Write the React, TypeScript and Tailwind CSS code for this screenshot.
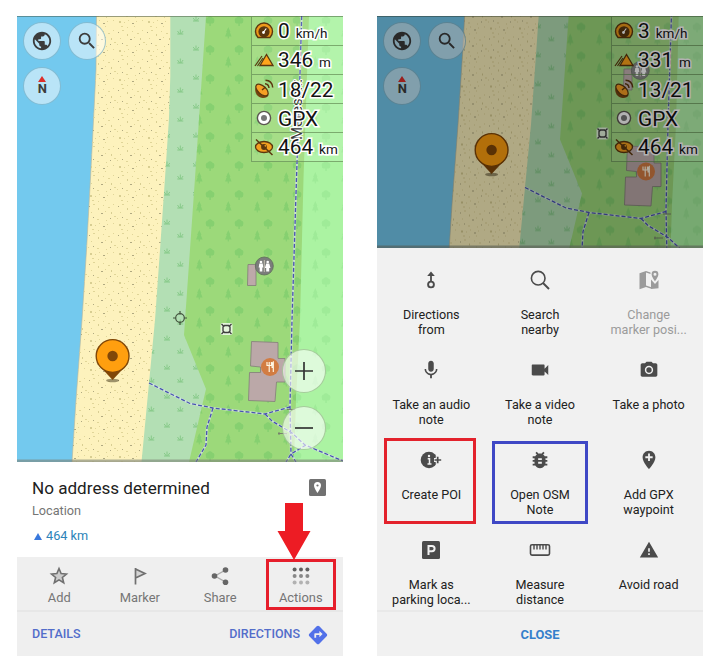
import React from "react";
import {
  MdPublic, MdSearch, MdMic, MdVideocam, MdPhotoCamera, MdBugReport, MdAddLocation, MdWarning, MdDirections,
} from "react-icons/md";

const SAND: [number, number, number][] = [
  [2, 3, 0], [6, 1, 1], [11, 5, 2], [16, 2, 1], [21, 4, 1], [26, 1, 1], [4, 9, 1], [14, 10, 0], [18, 8, 1],
  [24, 9, 2], [27, 13, 1], [1, 15, 1], [6, 14, 0], [10, 16, 1], [19, 17, 1], [23, 15, 0], [3, 21, 2], [8, 22, 1],
  [12, 20, 1], [16, 23, 0], [20, 21, 1], [26, 20, 1], [5, 26, 1], [11, 27, 1], [18, 26, 1],
];
const SAND_COLORS = ["#b0a981", "#e0d598", "#d8ce92"];

function Tree({ x, y }: { x: number; y: number }) {
  return <path d={`M${x - 0.7} ${y + 5}v-2.600c-2 .5-3.700-.5-3.400-2.200-.8-1.800.3-3.600 1.900-3.700.8-1.700 3.600-1.700 4.400 0 1.700.2 2.800 2 2 3.700.2 1.800-1.400 2.800-3.400 2.200V${y + 5}z`} />;
}
function Conifer({ x, y }: { x: number; y: number }) {
  return <path d={`M${x} ${y - 6}l2.200 5-.7.1 1.800 4.300H${x + 0.6}v2.100h-1.200v-2.100h-2.700l1.800-4.300-.7-.1z`} />;
}
function Grass({ x, y }: { x: number; y: number }) {
  return <path d={`M${x - 3} ${y + 2}h6M${x} ${y + 2}v-4.500M${x - 0.6} ${y + 2}l-2.200-3M${x + 0.6} ${y + 2}l2.200-3`} />;
}

function MapArt({ id, height, dx, dy, px, py, pin, cross }: {
  id: string; height: number; dx: number; dy: number; px: number; py: number; pin: [number, number]; cross?: boolean;
}) {
  const path = "M149 383l41 20.500 23 4.500 52 6 25-7M213 408l-6 19-1 18-10 17M265 414l7 7 20 12 13 12 38 16M306 445l-15 9-5 8M291 454l5 8M301.700 16L300 73l-3.500 105-4.500 142-2 85 1 49";
  return (
    <svg className="absolute inset-0 h-full w-full" viewBox={`17 16 326 ${height}`}>
      <defs>
        <pattern id={id + "sand"} width="29" height="29" patternUnits="userSpaceOnUse" patternTransform={`translate(${px} ${py})`}>
          {SAND.map(([x, y, c], i) => <rect key={i} x={x} y={y} width={i % 3 === 1 ? 2 : 1} height={c === 2 ? 2 : 1} fill={SAND_COLORS[c]} />)}
        </pattern>
        <pattern id={id + "tree"} x="195" y="13" width="29" height="29" patternUnits="userSpaceOnUse" patternTransform={`translate(${px} ${py})`}>
          <g fill="#86d070"><Tree x={15} y={8} /><Conifer x={4.3} y={20} /></g>
        </pattern>
        <pattern id={id + "pale"} x="195" y="13" width="29" height="29" patternUnits="userSpaceOnUse" patternTransform={`translate(${px} ${py})`}>
          <g fill="#9feb98"><Tree x={15} y={8} /><Conifer x={4.3} y={20} /></g>
        </pattern>
        <pattern id={id + "marsh"} x="160" y="13" width="29" height="29" patternUnits="userSpaceOnUse" patternTransform={`translate(${px} ${py})`}>
          <g stroke="#86c988" strokeWidth="1" fill="none"><Grass x={7} y={6} /><Grass x={20.3} y={19} /></g>
        </pattern>
      </defs>
      <rect x="0" y="0" width="360" height="480" fill="#73c9ee" />
      <g transform={`translate(${dx} ${dy})`}>
        {["#fdf2bd", `url(#${id}sand)`].map((f, i) => (
          <path key={f} fill={f} stroke={i ? "none" : "#b9b59b"} strokeWidth=".6" d="M96.500 16L96 70l-3.500 70-2 38-4 72-4.500 70-6 80-4 62h120V16z" />
        ))}
        {["#b3dfb4", `url(#${id}marsh)`].map((f) => (
          <path key={f} fill={f} d="M170.300 16v60l-1.300 42-4 60-5 72-5 70-6 63-7.500 79H345V16z" />
        ))}
        {["#9cd97a", `url(#${id}tree)`].map((f) => (
          <path key={f} fill={f} d="M206 16l-11 162-11 157 22 54-17 73h156V16z" />
        ))}
        {["#abf3a2", `url(#${id}pale)`].map((f) => (
          <path key={f} fill={f} d="M309 16l-5.500 162-3.500 142-4 80-2 62h52V16z" />
        ))}
        <path d={path} fill="none" stroke="#d7e4e6" strokeOpacity=".75" strokeWidth="2.200" />
        <path d={path} fill="none" stroke="#4854b0" strokeWidth="1.300" strokeDasharray="4 2" />
        <path d="M287 409.500h8M278 433.500h9M279 432v3" stroke="#77806c" fill="none" />
        <path d="M248 264.500h8v21h-8.500z" fill="#bda9a9" stroke="#827d77" strokeWidth=".8" />
        <circle cx="264.300" cy="266" r="9" fill="#7b7c7b" stroke="#5d6b59" strokeWidth=".8" />
        <path d="M264.300 260v12" stroke="#d8d3c4" strokeWidth=".8" />
        <g fill="#fff"><circle cx="261" cy="262" r="1.300" /><path d="M259.300 263.500h3.400l.6 4h-1v4h-2.600v-4h-1z" /><circle cx="267.700" cy="262" r="1.300" /><path d="M266.200 263.500h3l1.300 4.500h-1.300v3.500h-3V268h-1.300z" /></g>
        <path d="M251.500 341.500l26.500 1v16h7v23.500h-8.500l-1.500 19.500-26.500-1 1-28h11v-5.500l-10-1z" fill="#bba8a8" stroke="#837d78" strokeWidth=".8" />
        <circle cx="270" cy="367" r="9" fill="#d27c42" />
        <path d="M267 362v3.500h4.400V362M269.200 362v10M273.300 372v-10q-1.500 1-1.200 5.500h1.200" stroke="#fff8e5" strokeWidth="1.150" fill="none" />
        <rect x="220.500" y="323" width="12" height="12" rx="2" fill="#fff" fillOpacity=".75" />
        <g fill="none" stroke="#404040" strokeWidth="1.400"><path d="M224.500 325.500h4l1.500 1.500v4l-1.500 1.500h-4l-1.500-1.500v-4z" /><path d="M221.500 324l2.500 2.500M231.500 324l-2.500 2.500M221.500 334l2.500-2.500M231.500 334l-2.500-2.500" /></g>
      </g>
      {cross && (
        <>
          <text transform="translate(302 140) rotate(-90)" className="text-[15px]" fontFamily="Roboto, sans-serif" fill="#222" stroke="#fff" strokeWidth="2" paintOrder="stroke">Meress..:</text>
          <g stroke="#44543e" strokeWidth="1.200" fill="none"><circle cx="180" cy="318" r="4.300" /><path d="M180 311v3.500M180 321.500v3.500M173 318h3M184 318h3" /></g>
        </>
      )}
      <g transform={`translate(${pin[0]} ${pin[1]})`}>
        <ellipse cx="0" cy="24.500" rx="6.500" ry="1.800" fill="#5d5232" opacity=".6" />
        <path d="M-13 10L0 24 13 10z" fill="#804708" />
        <circle r="16.400" fill="#ff9f0f" stroke="#804708" strokeWidth="1.400" />
        <circle r="5.200" fill="#804708" />
      </g>
      <path d="M17 16.500h326" stroke="#394932" strokeOpacity=".45" />
      <path d={`M17 ${height + 14.7}h326`} stroke="#7b8276" strokeOpacity=".6" strokeWidth="2.500" />
    </svg>
  );
}

const gauges = [
  <svg viewBox="0 0 20 20" className="h-5 w-5"><path d="M4 16.500a8.500 8.500 0 1 1 12 0z" fill="#ee9a1a" stroke="#5c370e" strokeWidth="1.400" /><circle cx="10" cy="10.800" r="5.600" fill="#5c370e" /><path d="M9.300 11.500l3-4" stroke="#fff" strokeWidth="1.200" /><circle cx="9.500" cy="11.500" r="1.400" fill="#fff" /></svg>,
  <svg viewBox="0 0 20 20" className="h-5 w-5"><path d="M6 15.500L12.500 4.500 19 15.500z" fill="#ffa51b" stroke="#5c370e" strokeWidth="1.300" /><path d="M1 16L8 6M3.500 16L9 8" stroke="#5c370e" strokeWidth="1.200" /></svg>,
  <svg viewBox="0 0 20 20" className="h-5 w-5"><path d="M2.500 6C-1 12 3 18.500 9 19c3 0 4.500-1 5.500-2.500z" fill="#744411" /><ellipse cx="8" cy="11" rx="7.500" ry="4" transform="rotate(42 8 11)" fill="#f6a025" stroke="#5c370e" strokeWidth="1.200" /><path d="M8 11l3.500-3M11 4.800q3.500.2 4 4.200M11.500 1.300q6.500 0 7.200 7.200" fill="none" stroke="#5c370e" strokeWidth="1.500" /></svg>,
  <svg viewBox="0 0 20 20" className="h-5 w-5"><circle cx="10" cy="10" r="6.600" fill="#fff" stroke="#5b5550" strokeWidth="1.400" /><circle cx="10" cy="10" r="3" fill="#777" /></svg>,
  <svg viewBox="0 0 20 20" className="h-5 w-5"><ellipse cx="10" cy="10" rx="8.500" ry="5.500" fill="#f4a020" stroke="#5c370e" strokeWidth="1.300" /><circle cx="10" cy="10" r="2.900" fill="#5c370e" /><circle cx="11.300" cy="8.800" r=".9" fill="#f4a020" /><path d="M2 2.500l16.500 15.500" stroke="#5c370e" strokeWidth="1.500" /></svg>,
];

function MapControls({ values }: { values: [string, string][] }) {
  const round = "flex h-[38px] w-[38px] items-center justify-center rounded-full border border-[#5da0bb]/60 bg-white/50 text-[#3c3c3c]";
  return (
    <>
      <div className="absolute left-[6.400px] top-[6.400px] grid grid-cols-2 gap-[6.400px]">
        <div className={round}><MdPublic size={22} /></div>
        <div className={round}><MdSearch size={22} /></div>
        <div className={round}>
          <div className="flex flex-col items-center">
            <svg viewBox="0 0 8 6" className="h-[6px] w-2"><path d="M4 0l4 6H0z" fill="#dd2f2c" /></svg>
            <span className="mt-px text-[13px] font-bold leading-[12px]">N</span>
          </div>
        </div>
      </div>
      <div className="absolute right-0 top-px w-[92px]">
        {values.map(([v, u], i) => (
          <div key={i} className="flex h-[29px] items-center border-b border-l border-[#648c54]/70 bg-white/10 pl-[2px]">
            {gauges[i]}
            <span className="ml-[4px] whitespace-nowrap pt-[2px] text-[20.800px] leading-[28px] text-[#141414] [-webkit-text-stroke:3px_#fff] [paint-order:stroke]">
              {v}{u && <span className="ml-[6px] text-[13.500px]">{u}</span>}
            </span>
          </div>
        ))}
      </div>
    </>
  );
}

const star = <svg viewBox="0 0 20 20" className="h-5 w-5"><path d="M10 2.500l2.100 5 5.400.5-4.100 3.500 1.300 5.300-4.700-2.900-4.700 2.900 1.300-5.300L2.500 8l5.400-.5z" fill="#ccc" stroke="#707070" strokeWidth="1.600" /></svg>;
const flag = <svg viewBox="0 0 20 20" className="h-5 w-5"><path d="M5.500 2v16.500M5.500 3l9.500 4.500-9.500 4.500" fill="#d4d4d4" stroke="#707070" strokeWidth="1.700" /></svg>;
const share = <svg viewBox="0 0 20 20" className="h-5 w-5"><path d="M15.500 4L5 10l10.500 6" fill="none" stroke="#aaa" strokeWidth="1.400" /><g fill="#666"><circle cx="15.500" cy="4" r="2.800" /><circle cx="4.500" cy="10" r="2.800" /><circle cx="15.500" cy="16.200" r="2.800" /></g></svg>;
const dots = <svg viewBox="0 0 20 20" className="h-5 w-5">{[3.6, 10, 16.4].map((y, r) => [3.6, 10, 16.4].map((x) => <circle key={x + y * 20} cx={x} cy={y} r="2" fill={["#606060", "#888", "#b2b2b2"][r]} />))}</svg>;

const from = <svg viewBox="0 0 24 24" className="h-6 w-6" fill="none" stroke="currentColor"><path d="M12 6v7" strokeWidth="1.800" /><path d="M12 3.500l3.800 4.500H8.200z" fill="currentColor" stroke="none" /><circle cx="12" cy="16.500" r="2.900" strokeWidth="1.900" /></svg>;
const lens = <svg viewBox="0 0 24 24" className="h-6 w-6" fill="none" stroke="currentColor" strokeWidth="1.600"><circle cx="10.200" cy="10.200" r="6.800" /><path d="M15 15l6 6" strokeWidth="1.900" /></svg>;
const chart = <svg viewBox="0 0 24 24" className="h-6 w-6" fill="currentColor"><path d="M2.500 5.200L9 3v16l-6.500 2.300zM9 3l4.500 1.500V6L9 4.600zM9 17.500l6 2V21l-6-2zM14 11.500l4 4.500 3.500-4v8.200L14 21z" /><path d="M18 2.800a3.400 3.400 0 0 0-3.400 3.400c0 2.600 3.400 7 3.400 7s3.400-4.400 3.400-7A3.400 3.400 0 0 0 18 2.800zm0 1.900a1.500 1.500 0 1 1 0 3 1.500 1.500 0 0 1 0-3z" /></svg>;
const poi = <svg viewBox="0 0 24 24" className="h-6 w-6"><circle cx="10" cy="12" r="8.300" fill="currentColor" /><path d="M15 12h7.500M18.700 8.200v7.600" stroke="#f1f1f1" strokeWidth="4" /><path d="M15.500 12h6.700M18.700 8.700v6.600" stroke="currentColor" strokeWidth="1.700" /><path d="M8.700 10.800h1.800v5M8.500 16h4" stroke="#f1f1f1" strokeWidth="1.500" fill="none" /><circle cx="10" cy="8" r="1.200" fill="#f1f1f1" /></svg>;
const parking = <svg viewBox="0 0 24 24" className="h-6 w-6"><rect x="3" y="3" width="18" height="18" rx="1.500" fill="currentColor" /><path d="M9.500 17V8H13a2.500 2.500 0 0 1 0 5.200H9.500" fill="none" stroke="#f1f1f1" strokeWidth="2" /></svg>;
const ruler = <svg viewBox="0 0 24 24" className="h-6 w-6" fill="none" stroke="currentColor" strokeWidth="1.600"><rect x="2.500" y="6.700" width="19" height="10.400" rx="1.500" /><path d="M6 7v4.500M9 7v4.500M12 7v4.500M15 7v4.500M18 7v4.500" strokeWidth="1.400" /></svg>;

const actions: [React.ReactNode, string, string][] = [
  [from, "Directions", "from"], [lens, "Search", "nearby"], [chart, "Change", "marker posi..."],
  [<MdMic size={22} />, "Take an audio", "note"], [<MdVideocam size={22} />, "Take a video", "note"], [<MdPhotoCamera size={20} />, "Take a photo", ""],
  [poi, "Create POI", ""], [<MdBugReport size={22} />, "Open OSM", "Note"], [<MdAddLocation size={22} />, "Add GPX", "waypoint"],
  [parking, "Mark as", "parking loca..."], [ruler, "Measure", "distance"], [<MdWarning size={20} />, "Avoid road", ""],
];

export default function App() {
  return (
    <div className="flex h-[672px] w-[720px] gap-[34px] overflow-hidden bg-white pl-[17px] pt-4 font-[Roboto,sans-serif]">
      <section className="relative flex h-[640px] w-[326px] flex-col">
        <div className="relative h-[446px] overflow-hidden">
          <MapArt id="a" height={446} dx={0} dy={0} px={0} py={0} pin={[112.6, 356]} cross />
          <MapControls values={[["0", "km/h"], ["346", "m"], ["18/22", ""], ["GPX", ""], ["464", "km"]]} />
          <div className="absolute bottom-[12px] right-[17px] flex flex-col gap-[13px]">
            {["M2 10h18M11 1v18", "M2 10h18"].map((d) => (
              <div key={d} className="flex h-[44px] w-[44px] items-center justify-center rounded-full border border-[#8eb681]/70 bg-white/60">
                <svg viewBox="0 0 22 20" className="h-5 w-[22px]"><path d={d} stroke="#333" strokeWidth="1.700" /></svg>
              </div>
            ))}
          </div>
        </div>
        <div className="flex h-[95px] justify-between bg-white pl-[15px] pr-[17px] pt-[15px]">
          <div>
            <h1 className="text-[17.100px] leading-[22px] text-[#212121]">No address determined</h1>
            <p className="mt-[4px] text-[12.700px] leading-4 text-[#757575]">Location</p>
            <p className="mt-[9px] flex items-center text-[12.700px] leading-4 text-[#2c83b9]">
              <svg viewBox="0 0 8 7" className="ml-[2px] mr-[4px] h-[7px] w-2"><path d="M4 0l4 7H0z" fill="#3878dd" /></svg>464 km
            </p>
          </div>
          <svg viewBox="0 0 17 17" className="mt-[2px] h-[17px] w-[17px]"><rect width="17" height="17" rx="1.500" fill="#717171" /><path d="M8.500 3a3.500 3.500 0 0 0-3.500 3.500C5 9 8.500 14 8.500 14S12 9 12 6.500A3.500 3.500 0 0 0 8.500 3z" fill="#fff" /><circle cx="8.500" cy="6.500" r="1.100" fill="#717171" /></svg>
        </div>
        <div className="grid h-[55px] grid-cols-4 border-b-2 border-[#e7e7e7] bg-[#efefef] px-[2px] pt-[9px]">
          {[[star, "Add"], [flag, "Marker"], [share, "Share"], [dots, "Actions"]].map(([icon, label], i) => (
            <div key={i} className="flex flex-col items-center">
              {icon}<span className="mt-[4px] text-[12.900px] leading-4 text-[#757575]">{label}</span>
            </div>
          ))}
        </div>
        <div className="flex h-[44px] items-center justify-between bg-[#efefef] pl-[15px] pr-[14px] pt-px text-[12.500px] font-medium text-[#536dca]">
          <span>DETAILS</span>
          <span className="flex items-center gap-[7px]">DIRECTIONS <MdDirections size={22} color="#5271e9" /></span>
        </div>
        <div className="absolute left-[249px] top-[543px] h-[51px] w-[70px] border-[3px] border-[#e61e2b]" />
        <svg viewBox="0 0 34 57" className="absolute left-[260px] top-[487px] h-[57px] w-[34px]"><path d="M8 0h18v28h7.500L17 57 .5 28H8z" fill="#ed1c24" /></svg>
      </section>

      <section className="relative flex h-[640px] w-[326px] flex-col">
        <div className="relative h-[232px] overflow-hidden">
          <MapArt id="b" height={232} dx={16} dy={-195.5} px={-5} py={202} pin={[131.6, 150]} />
          <MapControls values={[["3", "km/h"], ["331", "m"], ["13/21", ""], ["GPX", ""], ["464", "km"]]} />
          <div className="absolute inset-0 bg-black/30" />
        </div>
        <div className="relative h-[364px] border-b-2 border-[#e9e9e9] bg-[#f1f1f1] pt-[10px]">
          <div className="grid grid-cols-3">
            {actions.map(([icon, a, b], i) => (
              <div key={a} className={`flex h-[90px] flex-col items-center pt-[10px] ${i === 2 ? "text-[#9b9b9b]" : "text-[#4b4b4b]"}`}>
                <div className="flex h-6 items-center">{icon}</div>
                <p className={`mt-[15px] whitespace-nowrap text-center text-[12.600px] leading-[15px] ${i === 2 ? "" : "text-[#212121]"}`}>{a}<br />{b}</p>
              </div>
            ))}
          </div>
          <div className="absolute left-[7px] top-[190px] h-[86px] w-[92px] border-[3px] border-[#e3222c]" />
          <div className="absolute left-[115px] top-[193px] h-[83px] w-[96px] border-[3px] border-[#3f48c5]" />
        </div>
        <div className="flex h-[44px] items-center justify-center bg-[#f1f1f1] pt-px text-[12.900px] font-bold text-[#357fcb]">CLOSE</div>
      </section>
    </div>
  );
}
